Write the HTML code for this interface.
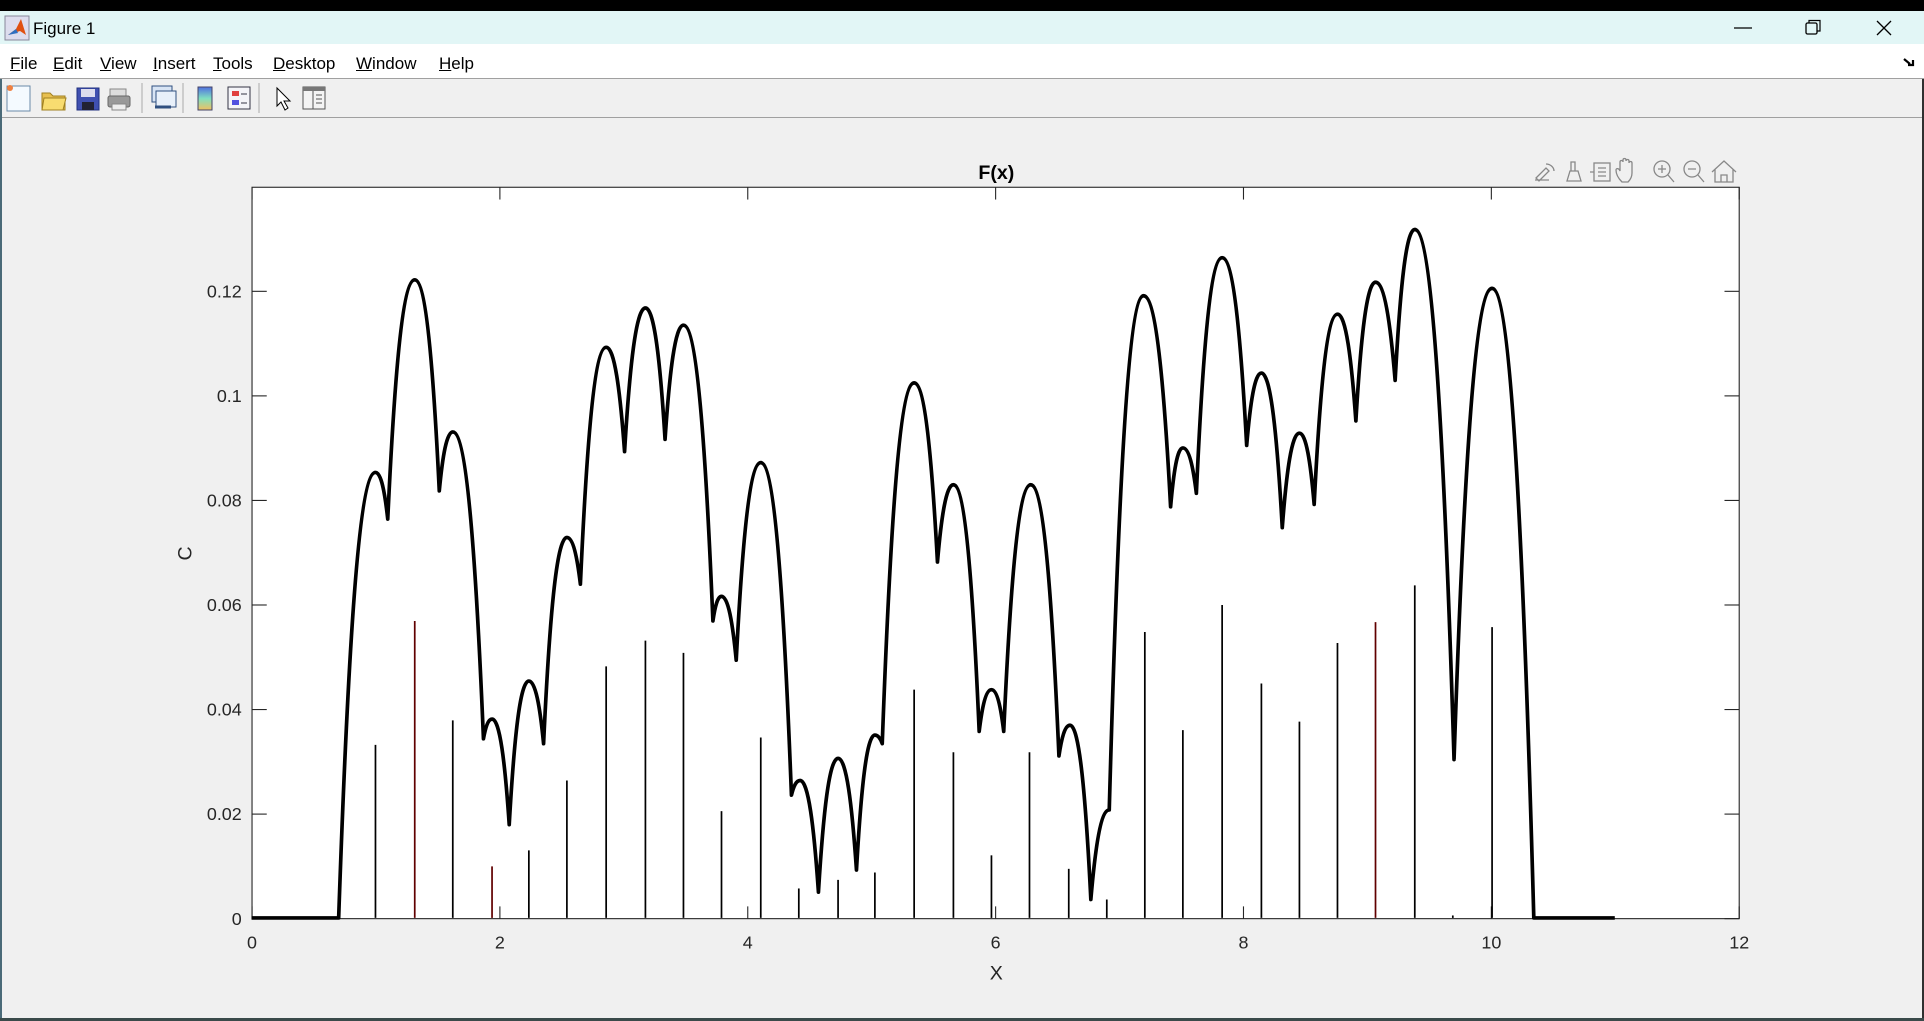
<!DOCTYPE html>
<html><head><meta charset="utf-8">
<style>
html,body{margin:0;padding:0;width:1924px;height:1021px;overflow:hidden;background:#f0f0f0;font-family:"Liberation Sans",sans-serif;}
#top{position:absolute;left:0;top:0;width:1924px;height:11px;background:#000;}
#title{position:absolute;left:0;top:11px;width:1924px;height:33px;background:#e2f6f6;}
#title span{position:absolute;left:33px;top:8px;font-size:17px;color:#000;}
#menu{position:absolute;left:0;top:44px;width:1924px;height:34px;background:#fff;border-bottom:1px solid #a0a0a0;}
#menu span{position:absolute;top:10px;font-size:17px;color:#000;}
#tb{position:absolute;left:0;top:79px;width:1924px;height:38px;background:#f0f0f0;border-bottom:1px solid #a0a0a0;}
#lb{position:absolute;left:0;top:79px;width:2px;height:942px;background:#4a6a78;}
#rb{position:absolute;right:0;top:79px;width:2px;height:942px;background:#303030;}
#bb{position:absolute;left:0;top:1018px;width:1924px;height:3px;background:#3a4a4a;}
svg{position:absolute;left:0;top:0;}
</style></head><body>
<div id="top"></div>
<div id="title">
<svg width="26" height="26" style="left:4px;top:4px" viewBox="0 0 26 26"><rect x="1" y="1" width="24" height="24" fill="#dde" stroke="#889"/><path d="M4 20 L12 14 L17 4 L22 20 L16 16 Z" fill="#e05010"/><path d="M4 20 L12 14 L14 18Z" fill="#3070c0"/></svg>
<span>Figure 1</span>
<svg width="200" height="33" style="left:1724px;top:0" viewBox="0 0 200 33"><line x1="10" y1="17" x2="28" y2="17" stroke="#000" stroke-width="1.2"/><rect x="82" y="12" width="11" height="11" fill="none" stroke="#000" stroke-width="1.3" rx="1.5"/><path d="M85 12 V9.5 H96 V20 H93" fill="none" stroke="#000" stroke-width="1.2"/><path d="M153 10 L167 24 M167 10 L153 24" stroke="#000" stroke-width="1.3"/></svg>
</div>
<div id="menu">
<span style="left:10px"><u>F</u>ile</span>
<span style="left:53px"><u>E</u>dit</span>
<span style="left:100px"><u>V</u>iew</span>
<span style="left:153px"><u>I</u>nsert</span>
<span style="left:213px"><u>T</u>ools</span>
<span style="left:273px"><u>D</u>esktop</span>
<span style="left:356px"><u>W</u>indow</span>
<span style="left:439px"><u>H</u>elp</span>
<svg width="14" height="12" style="left:1903px;top:13px" viewBox="0 0 14 12"><path d="M1 2 L7 7 M5 8 L10 8 L10 3" stroke="#000" stroke-width="2.2" fill="none"/></svg>
</div>
<div id="tb">
<svg width="340" height="38" viewBox="0 0 340 38">
<rect x="7" y="7" width="23" height="25" fill="#f4faff" stroke="#6a8aa8"/><circle cx="10" cy="9" r="3" fill="#f08040"/>
<path d="M42 14 h8 l3 3 h12 v14 h-23z" fill="#e8c050" stroke="#a08020"/><path d="M44 19 h22 l-3 12 h-21z" fill="#f8dc70" stroke="#a08020"/>
<rect x="77" y="9" width="22" height="22" fill="#4050b0" stroke="#203080"/><rect x="81" y="10" width="14" height="8" fill="#dde"/><rect x="82" y="23" width="12" height="8" fill="#223"/>
<rect x="110" y="10" width="16" height="8" fill="#ddd" stroke="#888"/><rect x="108" y="17" width="22" height="11" rx="2" fill="#999" stroke="#666"/><rect x="112" y="25" width="14" height="6" fill="#eee" stroke="#888"/>
<line x1="142" y1="4" x2="142" y2="34" stroke="#aaa"/>
<rect x="152" y="7" width="20" height="16" fill="#d8e4f4" stroke="#305080"/><rect x="156" y="12" width="20" height="16" fill="#e8f0fa" stroke="#305080"/><path d="M155 28 h8 M163 28 h8" stroke="#305080" stroke-width="3"/>
<line x1="183" y1="4" x2="183" y2="34" stroke="#aaa"/>
<defs><linearGradient id="cb" x1="0" y1="0" x2="0" y2="1"><stop offset="0" stop-color="#5070e0"/><stop offset=".5" stop-color="#80e0c0"/><stop offset="1" stop-color="#f0c060"/></linearGradient></defs>
<rect x="198" y="8" width="14" height="23" fill="url(#cb)" stroke="#446"/>
<rect x="228" y="8" width="22" height="22" fill="#f4f4f8" stroke="#334"/><rect x="232" y="12" width="7" height="5" fill="#e04040"/><rect x="232" y="21" width="7" height="5" fill="#5050e0"/><path d="M241 15h6M241 24h6" stroke="#334"/>
<line x1="259" y1="4" x2="259" y2="34" stroke="#aaa"/>
<path d="M277 9 L277 27 L281 23 L285 31 L288 29 L284 22 L290 22 Z" fill="#fff" stroke="#000"/>
<rect x="303" y="8" width="22" height="22" fill="#f4f4f4" stroke="#555"/><rect x="303" y="8" width="22" height="4" fill="#777"/><line x1="313" y1="12" x2="313" y2="30" stroke="#555"/><path d="M316 16h6M316 20h6M316 24h6" stroke="#555"/>
</svg>
</div>
<div id="lb"></div><div id="rb"></div><div id="bb"></div>

<svg width="1924" height="1021" viewBox="0 0 1924 1021" style="pointer-events:none">
<g fill="none" stroke="#888" stroke-width="1.3">
<path d="M1536 178 l10-10 l3 3 l-10 10z M1535 180 h14 M1546 164 c4 0 8 3 8 7"/>
<path d="M1567 181 h14 l-3-10 h-8z M1571 171 v-9 h4 v9"/>
<rect x="1594" y="163" width="16" height="18"/><path d="M1598 168h8M1598 172h8M1598 176h8 M1594 172 l-4 0"/>
<path d="M1622 182 c-4-4-6-8-6-12 c0-2 3-2 4 1 v-9 c0-2 3-2 3 0 v-2 c0-2 3-2 3 0 v1 c0-2 3-2 3 0 v2 c0-2 3-2 3 0 v10 c0 4-2 7-4 9z"/>
<circle cx="1662" cy="169" r="8"/><path d="M1668 175 l6 7 M1658 169h8 M1662 165v8"/>
<circle cx="1692" cy="169" r="8"/><path d="M1698 175 l6 7 M1688 169h8"/>
<path d="M1712 172 l12-11 l12 11 M1715 169 v13 h18 v-13 M1721 182 v-7 h6 v7"/>
</g>
</svg>

<svg width="1924" height="1021" viewBox="0 0 1568 832" preserveAspectRatio="none">
<rect x="205.4" y="152.6" width="1212" height="596" fill="#fff" stroke="#262626" stroke-width="0.9"/>
<g id="ticks" stroke="#262626" stroke-width="0.9"></g>
<g id="stems" stroke-width="1.4"></g>
<path id="curve" fill="none" stroke="#000" stroke-width="3" stroke-linejoin="round"/>
<g font-family="Liberation Sans, sans-serif" font-size="14.6" fill="#262626">
<g id="xl" text-anchor="middle"></g>
<g id="yl" text-anchor="end"></g>
<text x="812" y="146" text-anchor="middle" font-weight="bold" font-size="16" fill="#000">F(x)</text>
<text x="812" y="798" text-anchor="middle" font-size="16">X</text>
<text x="156" y="451" text-anchor="middle" font-size="16" transform="rotate(-90 156 451)">C</text>
</g>
</svg>
<script>
var NS="http://www.w3.org/2000/svg";
function el(t,a,p){var e=document.createElementNS(NS,t);for(var k in a)e.setAttribute(k,a[k]);p.appendChild(e);return e;}
var tk=document.getElementById('ticks'),xl=document.getElementById('xl'),yl=document.getElementById('yl');
for(var i=0;i<=6;i++){var x=205.4+i*202;el('line',{x1:x,y1:748.6,x2:x,y2:738.6},tk);el('line',{x1:x,y1:152.6,x2:x,y2:162.6},tk);var t=el('text',{x:x,y:773},xl);t.textContent=String(i*2);}
var yls=['0','0.02','0.04','0.06','0.08','0.1','0.12'];
for(var i=0;i<=6;i++){var y=748.6-i*85.2;el('line',{x1:205.4,y1:y,x2:217.4,y2:y},tk);el('line',{x1:1417.4,y1:y,x2:1405.4,y2:y},tk);var t=el('text',{x:197,y:y+5},yl);t.textContent=yls[i];}
var st=[[306,607],[338,506,1],[369,587],[401,706,1],[431,693],[462,636],[494,543],[526,522],[557,532],[588,661],[620,601],[651,724],[683,717],[713,711],[745,562],[777,613],[808,697],[839,613],[871,708],[902,733],[933,515],[964,595],[996,493],[1028,557],[1059,588],[1090,524],[1121,507,1],[1153,477],[1184,746],[1216,511]];
var sg=document.getElementById('stems');
st.forEach(function(s){el('line',{x1:s[0],y1:748,x2:s[0],y2:s[1],stroke:s[2]?'#600000':'#000'},sg);});
var P=[[276,748,'c'],[306,385,'p'],[316,423,'c'],[338,228,'p'],[358,400,'c'],[369,352,'p'],[394,602,'c'],[401,586,'p'],[415,672,'c'],[431,555,'p'],[443,606,'c'],[462,438,'p'],[473,476,'c'],[494,283,'p'],[509,368,'c'],[526,251,'p'],[542,358,'c'],[557,265,'p'],[581,506,'c'],[588,486,'p'],[600,538,'c'],[620,377,'p'],[645,648,'c'],[652,636,'p'],[667,727,'c'],[683,618,'p'],[698,709,'c'],[713,599,'p'],[719,606,'c'],[745,312,'p'],[764,458,'c'],[777,395,'p'],[798,596,'c'],[808,562,'p'],[818,596,'c'],[840,395,'p'],[863,616,'c'],[872,591,'p'],[889,733,'c'],[904,660,'p'],[904,660,'c'],[932,241,'p'],[954,413,'c'],[964,365,'p'],[975,402,'c'],[996,210,'p'],[1016,363,'c'],[1028,304,'p'],[1045,430,'c'],[1059,353,'p'],[1071,411,'c'],[1090,256,'p'],[1105,343,'c'],[1121,230,'p'],[1137,310,'c'],[1153,187,'p'],[1185,619,'c'],[1216,235,'p'],[1250,748,'c']];
var d='M205,748 L276,748';
for(var i=1;i<P.length;i++){var A=P[i-1],B=P[i];
 if(B[2]=='p'){d+=' C'+(A[0]+(B[0]-A[0])*0.25)+','+(A[1]+(B[1]-A[1])*0.6)+' '+(B[0]-(B[0]-A[0])*0.45)+','+B[1]+' '+B[0]+','+B[1];}
 else{d+=' C'+(A[0]+(B[0]-A[0])*0.45)+','+A[1]+' '+(B[0]-(B[0]-A[0])*0.25)+','+(B[1]+(A[1]-B[1])*0.6)+' '+B[0]+','+B[1];}}
d+=' L1316,748';
document.getElementById('curve').setAttribute('d',d);
</script>
</body></html>
